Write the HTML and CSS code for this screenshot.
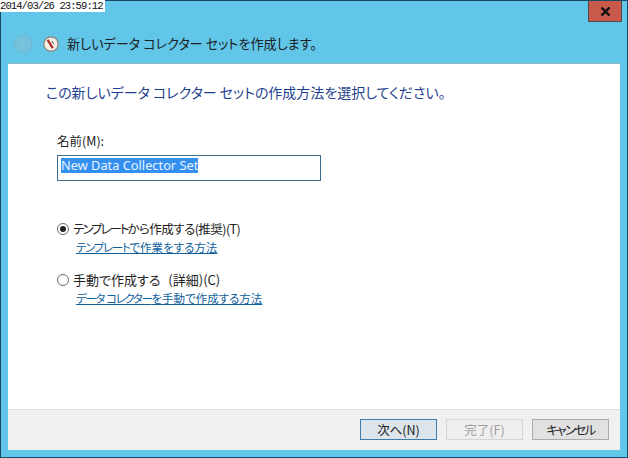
FILE: index.html
```html
<!DOCTYPE html>
<html lang="ja">
<head>
<meta charset="utf-8">
<title>新しいデータ コレクター セット</title>
<link rel="stylesheet" href="styles.css">
</head>
<body>
<div class="window">
  <div class="stamp">2014/03/26 23:59:12</div>
  <div class="titlebar"><div class="close"><svg width="11" height="9" viewBox="0 0 11 9"><path d="M1.5 0.5 L9.5 8.5 M9.5 0.5 L1.5 8.5" stroke="#111" stroke-width="2.4" fill="none"/></svg></div></div>
  <div class="header">
    <svg class="back" width="20" height="20" viewBox="0 0 20 20"><circle cx="10" cy="10" r="9" fill="#74c2dc" stroke="#6cb8d2"/><path d="M13 10 H7.5 M10 7.5 L7.5 10 L10 12.5" stroke="#80c8e0" stroke-width="1.2" fill="none"/></svg>
    <svg class="appicon" width="16" height="16" viewBox="0 0 16 16"><circle cx="8" cy="8" r="7.2" fill="#f3eee6" stroke="#8a8078" stroke-width="1.2"/><path d="M4.6 3.8 L9.8 12.2" stroke="#b02a26" stroke-width="2.2"/><path d="M9 5 L10.6 8" stroke="#555" stroke-width="1"/></svg>
    <span class="title">新しいデータ コレクター セットを作成します。</span>
  </div>
  <div class="panel">
    <div class="content">
      <h1 class="heading">この新しいデータ コレクター セットの作成方法を選択してください。</h1>
      <div class="form">
        <div class="label">名前(M):</div>
        <div class="input"><span class="selected">New Data Collector Set</span></div>
        <div class="options">
          <div class="option">
            <div class="radio-row"><span class="radio checked"></span><span class="tight"><span class="kt-row">テンプレート</span>から作成する(推奨)(T)</span></div>
            <a class="link" href="#"><span class="kt-link">テンプレート</span>で作業をする方法</a>
          </div>
          <div class="option">
            <div class="radio-row"><span class="radio"></span><span class="loose">手動で作成する (詳細)(C)</span></div>
            <a class="link" href="#"><span class="kt-long">データ コレクター</span>を手動で作成する方法</a>
          </div>
        </div>
      </div>
    </div>
    <div class="footer">
      <div class="btn primary">次へ(N)</div>
      <div class="btn disabled">完了(F)</div>
      <div class="btn"><span class="kt-btn">キャンセル</span></div>
    </div>
  </div>
</div>
</body>
</html>
```
FILE: styles.css
```css
* { box-sizing: border-box; }
html, body { margin: 0; padding: 0; }
body {
  width: 628px;
  height: 458px;
  overflow: hidden;
  font-family: "Noto Sans CJK JP", "Noto Sans", sans-serif;
  font-feature-settings: "palt";
  color: #222;
}
.window {
  position: relative;
  width: 628px;
  height: 458px;
  display: flex;
  flex-direction: column;
  background: #62c6e8;
  border: 1px solid #164a66;
  padding: 0 7px 7px;
}
.stamp {
  position: absolute;
  left: -1px;
  top: -1px;
  width: 105px;
  height: 12px;
  background: #fff;
  color: #111;
  font: 10.5px/12px "Liberation Mono", monospace;
  letter-spacing: -0.9px;
  white-space: nowrap;
}
.titlebar {
  height: 21px;
  flex: none;
  display: flex;
  justify-content: flex-end;
}
.close {
  width: 34px;
  height: 21px;
  background: #c75a4a;
  border: 1px solid #4f4a4e;
  border-top: 0;
  display: flex;
  align-items: center;
  justify-content: center;
  margin-right: -2px;
}
.header {
  height: 41px;
  flex: none;
  display: flex;
  align-items: center;
  padding: 3px 0 0 5px;
}
.back { flex: none; margin-right: 10px; }
.appicon { flex: none; margin-right: 8px; }
.title { font-size: 13.1px; line-height: 20px; color: #1c2126; white-space: nowrap; }
.panel {
  flex: 1;
  display: flex;
  flex-direction: column;
  background: #fff;
  border-top: 1px solid #8fb4c2;
  min-height: 0;
}
.content { flex: 1; padding: 17px 0 0 38px; }
.heading {
  margin: 0;
  font-size: 14px;
  font-weight: 400;
  line-height: 22px;
  color: #1f3f8f;
  white-space: nowrap;
}
.form { padding: 29px 0 0 11px; }
.label { font-size: 12.5px; line-height: 18px; color: #222; }
.input {
  width: 264px;
  height: 26px;
  margin-top: 5px;
  border: 1px solid #3d6f8f;
  padding: 2px 3px;
  font-family: "Noto Sans", sans-serif;
  font-size: 12.8px;
  line-height: 15px;
  white-space: nowrap;
}
.selected { background: #3390f0; color: #e8f2ff; display: inline-block; }
.options { padding-top: 39px; display: flex; flex-direction: column; gap: 15px; }
.radio-row { display: flex; align-items: center; font-size: 12.5px; line-height: 18px; gap: 4px; }
.radio {
  width: 12px;
  height: 12px;
  flex: none;
  border: 1px solid #6a6a6a;
  border-radius: 50%;
  background: #fff;
  display: flex;
  align-items: center;
  justify-content: center;
}
.radio.checked::after { content: ""; width: 6px; height: 6px; border-radius: 50%; background: #222; }
.tight { letter-spacing: -0.55px; }
.loose { font-size: 13px; word-spacing: 5px; }
.kt-row { letter-spacing: -2px; }
.kt-link { letter-spacing: -1.3px; }
.kt-long { letter-spacing: -1.4px; word-spacing: 1px; }
.kt-btn { letter-spacing: -1.7px; }
.link {
  display: block;
  margin: 1px 0 0 19px;
  font-size: 11.5px;
  line-height: 17px;
  color: #0f5f9c;
  text-decoration: underline;
}
.footer {
  height: 41px;
  flex: none;
  background: #f0f0f0;
  border-top: 1px solid #dfdfdf;
  display: flex;
  justify-content: flex-end;
  align-items: flex-start;
  gap: 9px;
  padding: 9px 11px 0 0;
}
.btn {
  width: 77px;
  height: 21px;
  background: #e1e1e1;
  border: 1px solid #adadad;
  font-size: 12.5px;
  line-height: 19px;
  text-align: center;
  color: #222;
}
.btn.primary { background: #dde5ec; border-color: #3f7da8; }
.btn.disabled { background: #efefef; border-color: #d4d4d4; color: #a0a0a0; }
```
